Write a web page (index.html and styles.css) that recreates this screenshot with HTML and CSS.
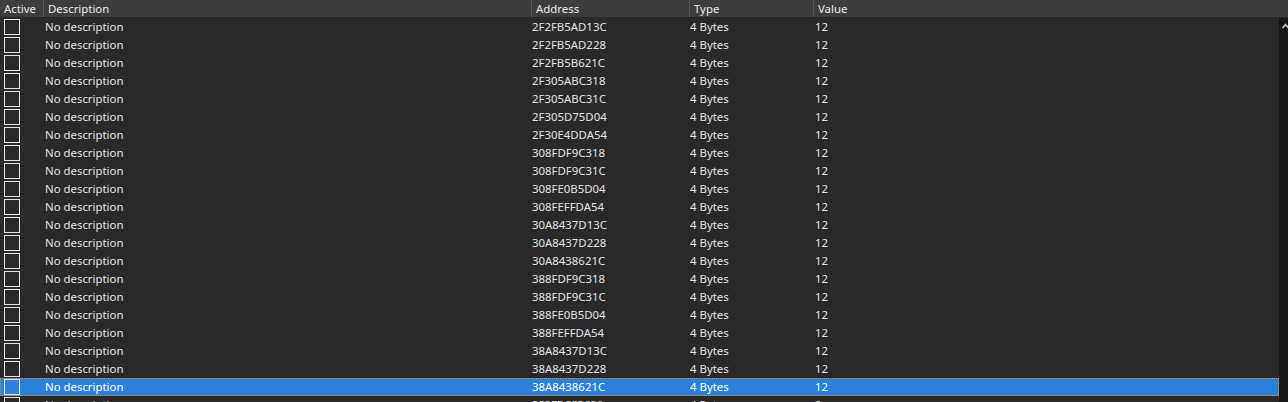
FILE: index.html
```html
<!DOCTYPE html>
<html lang="en">
<head>
    <meta charset="UTF-8">
    <title>Address list</title>
    <link rel="stylesheet" href="styles.css">
</head>
<body>
    <div class="list">
        <!-- column headers -->
        <div class="head">
            <div class="hcell first">Active</div>
            <div class="hcell">Description</div>
            <div class="hcell">Address</div>
            <div class="hcell">Type</div>
            <div class="hcell">Value</div>
        </div>

        <div class="body">
            <div class="rows">
                <div class="row"><div class="cell"><span class="check"></span></div><div class="cell desc">No description</div><div class="cell addr">2F2FB5AD13C</div><div class="cell type">4 Bytes</div><div class="cell val">12</div></div>
                <div class="row"><div class="cell"><span class="check"></span></div><div class="cell desc">No description</div><div class="cell addr">2F2FB5AD228</div><div class="cell type">4 Bytes</div><div class="cell val">12</div></div>
                <div class="row"><div class="cell"><span class="check"></span></div><div class="cell desc">No description</div><div class="cell addr">2F2FB5B621C</div><div class="cell type">4 Bytes</div><div class="cell val">12</div></div>
                <div class="row"><div class="cell"><span class="check"></span></div><div class="cell desc">No description</div><div class="cell addr">2F305ABC318</div><div class="cell type">4 Bytes</div><div class="cell val">12</div></div>
                <div class="row"><div class="cell"><span class="check"></span></div><div class="cell desc">No description</div><div class="cell addr">2F305ABC31C</div><div class="cell type">4 Bytes</div><div class="cell val">12</div></div>
                <div class="row"><div class="cell"><span class="check"></span></div><div class="cell desc">No description</div><div class="cell addr">2F305D75D04</div><div class="cell type">4 Bytes</div><div class="cell val">12</div></div>
                <div class="row"><div class="cell"><span class="check"></span></div><div class="cell desc">No description</div><div class="cell addr">2F30E4DDA54</div><div class="cell type">4 Bytes</div><div class="cell val">12</div></div>
                <div class="row"><div class="cell"><span class="check"></span></div><div class="cell desc">No description</div><div class="cell addr">308FDF9C318</div><div class="cell type">4 Bytes</div><div class="cell val">12</div></div>
                <div class="row"><div class="cell"><span class="check"></span></div><div class="cell desc">No description</div><div class="cell addr">308FDF9C31C</div><div class="cell type">4 Bytes</div><div class="cell val">12</div></div>
                <div class="row"><div class="cell"><span class="check"></span></div><div class="cell desc">No description</div><div class="cell addr">308FE0B5D04</div><div class="cell type">4 Bytes</div><div class="cell val">12</div></div>
                <div class="row"><div class="cell"><span class="check"></span></div><div class="cell desc">No description</div><div class="cell addr">308FEFFDA54</div><div class="cell type">4 Bytes</div><div class="cell val">12</div></div>
                <div class="row"><div class="cell"><span class="check"></span></div><div class="cell desc">No description</div><div class="cell addr">30A8437D13C</div><div class="cell type">4 Bytes</div><div class="cell val">12</div></div>
                <div class="row"><div class="cell"><span class="check"></span></div><div class="cell desc">No description</div><div class="cell addr">30A8437D228</div><div class="cell type">4 Bytes</div><div class="cell val">12</div></div>
                <div class="row"><div class="cell"><span class="check"></span></div><div class="cell desc">No description</div><div class="cell addr">30A8438621C</div><div class="cell type">4 Bytes</div><div class="cell val">12</div></div>
                <div class="row"><div class="cell"><span class="check"></span></div><div class="cell desc">No description</div><div class="cell addr">388FDF9C318</div><div class="cell type">4 Bytes</div><div class="cell val">12</div></div>
                <div class="row"><div class="cell"><span class="check"></span></div><div class="cell desc">No description</div><div class="cell addr">388FDF9C31C</div><div class="cell type">4 Bytes</div><div class="cell val">12</div></div>
                <div class="row"><div class="cell"><span class="check"></span></div><div class="cell desc">No description</div><div class="cell addr">388FE0B5D04</div><div class="cell type">4 Bytes</div><div class="cell val">12</div></div>
                <div class="row"><div class="cell"><span class="check"></span></div><div class="cell desc">No description</div><div class="cell addr">388FEFFDA54</div><div class="cell type">4 Bytes</div><div class="cell val">12</div></div>
                <div class="row"><div class="cell"><span class="check"></span></div><div class="cell desc">No description</div><div class="cell addr">38A8437D13C</div><div class="cell type">4 Bytes</div><div class="cell val">12</div></div>
                <div class="row"><div class="cell"><span class="check"></span></div><div class="cell desc">No description</div><div class="cell addr">38A8437D228</div><div class="cell type">4 Bytes</div><div class="cell val">12</div></div>
                <div class="row selected"><div class="cell"><span class="check"></span></div><div class="cell desc">No description</div><div class="cell addr">38A8438621C</div><div class="cell type">4 Bytes</div><div class="cell val">12</div></div>
                <div class="row"><div class="cell"><span class="check"></span></div><div class="cell desc">No description</div><div class="cell addr">3F3FBCF5630</div><div class="cell type">4 Bytes</div><div class="cell val">2</div></div>
            </div>

            <!-- vertical scrollbar -->
            <div class="scrollbar">
                <svg class="arrow" width="9" height="8" viewBox="0 0 9 8">
                    <polyline points="3.5,6 6.5,2.5 9.5,6" fill="none" stroke="#c8c8c8" stroke-width="1.6"/>
                </svg>
            </div>
        </div>
    </div>
</body>
</html>
```

FILE: styles.css
```css
html, body {
    margin: 0;
    height: 100%;
    overflow: hidden;
}

body {
    background: #282828;
    color: #e4e4e4;
    font-family: "Noto Sans", "Open Sans", sans-serif;
    font-size: 11.4px;
}

.list {
    display: flex;
    flex-direction: column;
    height: 100%;
}

/* header bar */
.head {
    display: grid;
    grid-template-columns: 43px 488px 158px 124px 1fr;
    height: 17px;
    background: #3d3d3d;
    border-bottom: 1px solid #262626;
}

.hcell {
    line-height: 17px;
    padding-left: 4px;
    border-left: 1px solid #535353;
    color: #ececec;
    white-space: nowrap;
}

.hcell.first {
    border-left: none;
    padding-left: 4px;
}

.body {
    flex: 1;
    display: flex;
    overflow: hidden;
}

.rows {
    flex: 1;
    background: #292929;
}

.row {
    display: grid;
    grid-template-columns: 43px 488px 158px 124px 1fr;
    height: 18px;
}

.row.selected {
    background: #2b80d9;
    outline: 1px dotted #ee8a30;
    outline-offset: -1px;
    color: #fff;
}

.cell {
    line-height: 18px;
    white-space: nowrap;
}

.check {
    display: block;
    width: 14px;
    height: 14px;
    margin: 1px 0 0 4px;
    border: 1px solid #e8e8e8;
}

.desc {
    padding-left: 2px;
}

.addr {
    padding-left: 1px;
}

.type {
    padding-left: 1px;
}

.val {
    padding-left: 2px;
}

.scrollbar {
    width: 9px;
    background: #171717;
}

.arrow {
    display: block;
    margin-top: 4px;
}
```
